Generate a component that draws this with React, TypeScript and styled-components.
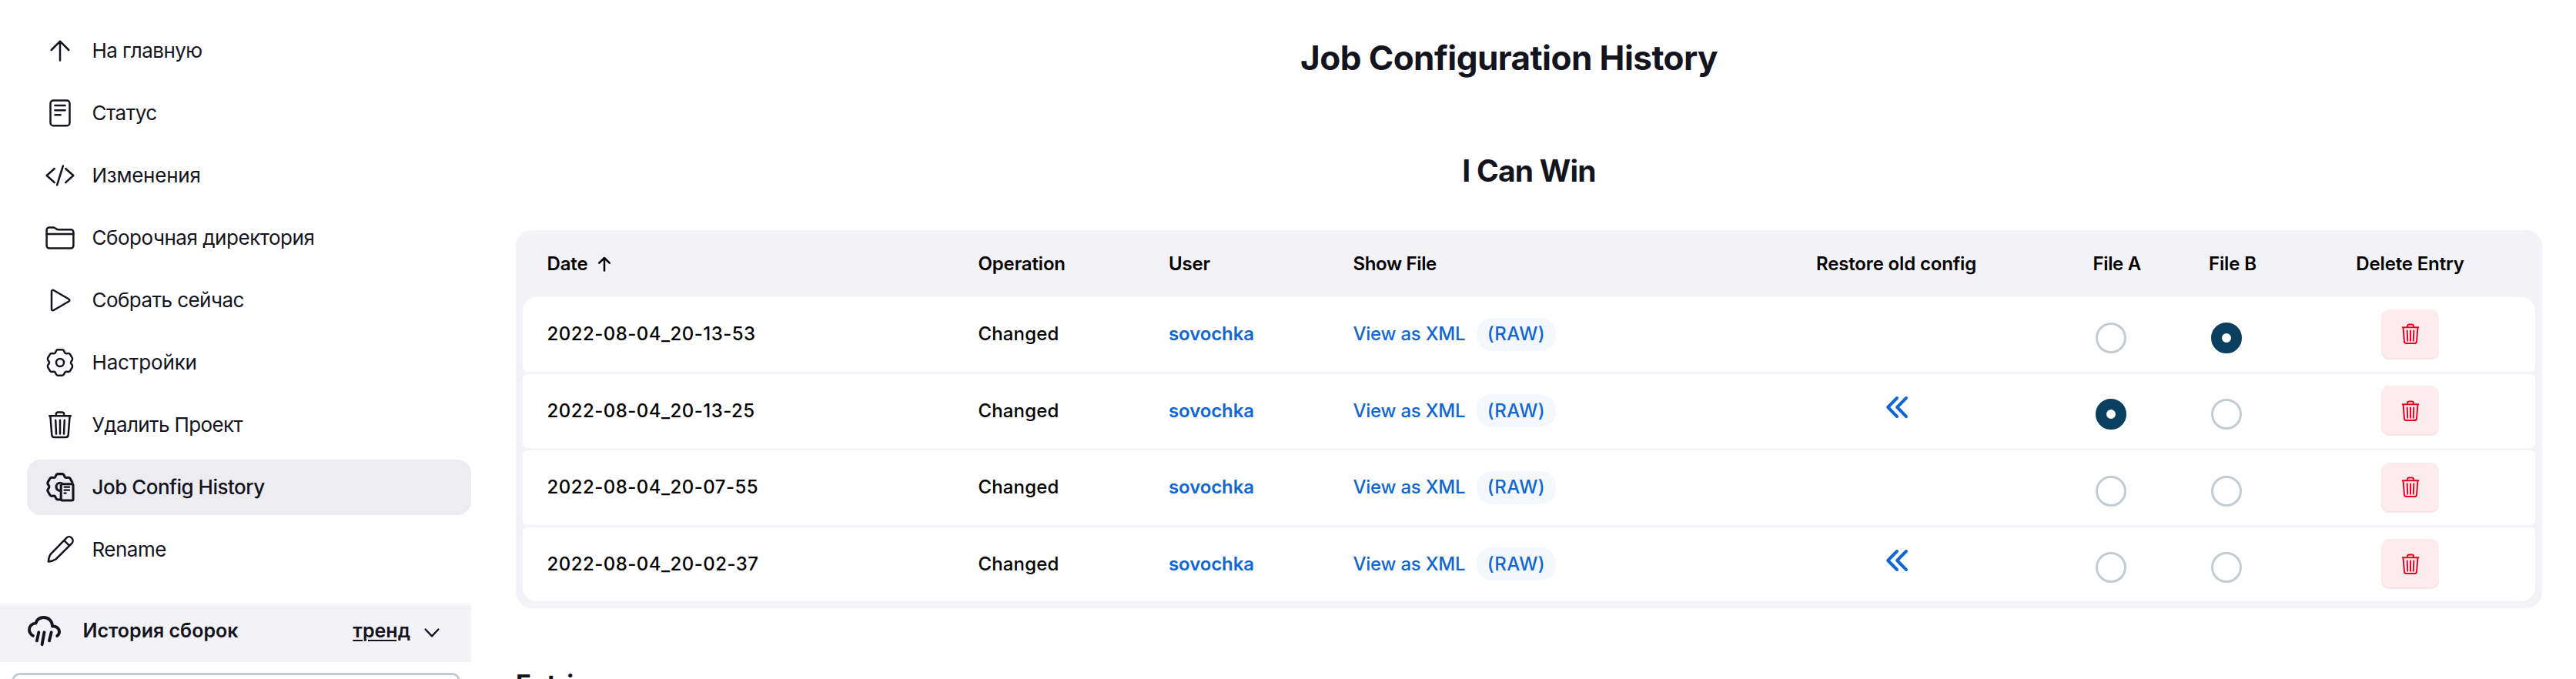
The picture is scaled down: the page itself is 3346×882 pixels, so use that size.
import React, { useState } from "react";
import styled, { createGlobalStyle, css } from "styled-components";

const GlobalStyle = createGlobalStyle`
  * { box-sizing: border-box; }
  html, body { margin: 0; padding: 0; background: #fff; }
  body {
    height: 882px;
    overflow: hidden;
    font-family: Inter, "Liberation Sans", sans-serif;
    color: #14141f;
  }
`;

/* ---------- page ---------- */

const Page = styled.div`
  display: flex;
  width: 3346px;
  height: 882px;
  overflow: hidden;
`;

const SidePanel = styled.aside`
  display: flex;
  flex-direction: column;
  flex: none;
  width: 612px;
  padding-top: 30px;
`;

const Tasks = styled.nav`
  display: flex;
  flex-direction: column;
  gap: 9px;
  padding-left: 35px;
`;

const Task = styled.a<{ $active?: boolean; $spacing: number }>`
  display: flex;
  align-items: center;
  gap: 17.5px;
  height: 72px;
  padding-left: 19px;
  border-radius: 18px;
  font-size: 26px;
  line-height: 1;
  font-weight: ${(p) => (p.$active ? 500 : 400)};
  letter-spacing: ${(p) => p.$spacing}px;
  background: ${(p) => (p.$active ? "#edecf1" : "transparent")};
  color: inherit;
  white-space: nowrap;
`;

const Icon = styled.svg<{ $width?: number }>`
  flex: none;
  width: 48px;
  height: 48px;
  fill: none;
  stroke: currentColor;
  stroke-width: ${(p) => p.$width ?? 2.5};
  stroke-linecap: round;
  stroke-linejoin: round;
`;

const BuildHistory = styled.section`
  display: flex;
  flex-direction: column;
  margin-top: 34px;
  border-top: 1px solid #f0eff4;
  padding-top: 1px;
`;

const BuildHeader = styled.header`
  display: flex;
  align-items: center;
  height: 74px;
  padding: 0 40px 8px 33px;
  background: #f3f2f7;
  font-size: 25px;
  font-weight: 600;
  line-height: 1;
`;

const BuildTitle = styled.span`
  flex: 1;
  padding-left: 26.5px;
`;

const TrendLink = styled.a`
  color: inherit;
  text-decoration: underline;
  text-decoration-thickness: 2px;
  text-underline-offset: 3px;
  margin-right: 17px;
`;

const Chevron = styled.svg`
  width: 22px;
  height: 14px;
  margin-top: 5px;
  fill: none;
  stroke: currentColor;
  stroke-width: 2.4;
  stroke-linecap: round;
  stroke-linejoin: round;
`;

const Filter = styled.input`
  flex: none;
  width: 583px;
  height: 70px;
  margin: 14px 0 0 15px;
  border: 3px solid #c3ccd1;
  border-radius: 11px;
  outline: none;
  background: #fff;
`;

const Main = styled.main`
  display: flex;
  flex-direction: column;
  flex: none;
  width: 2632px;
  margin-left: 58px;
`;

const PageTitle = styled.h1`
  margin: 45px 52px 0 0;
  font-size: 44px;
  line-height: 60px;
  font-weight: 700;
  letter-spacing: -0.55px;
  text-align: center;
`;

const JobName = styled.h2`
  margin: 87px 0 0;
  font-size: 39px;
  line-height: 60px;
  font-weight: 700;
  letter-spacing: -0.8px;
  text-align: center;
`;

const EntriesTitle = styled.h3`
  margin: 78px 0 0;
  font-size: 33px;
  line-height: 40px;
  font-weight: 700;
`;

/* ---------- table ---------- */

const Table = styled.div`
  display: flex;
  flex-direction: column;
  gap: 3px;
  margin-top: 47px;
  padding: 0 9px 9px;
  border-radius: 21px;
  background: #f3f2f7;
  color: #000;
  font-size: 24px;
  line-height: 1;
`;

const columns = css`
  display: grid;
  grid-template-columns: 560px 247.5px 239.5px 450px 511px 150.5px 99.5px 324px;
  align-items: center;
  padding-left: 31.5px;
`;

const HeaderRow = styled.div`
  ${columns}
  height: 87px;
  margin-bottom: -3px;
  font-weight: 600;
  letter-spacing: -0.15px;
`;

const Row = styled.div`
  ${columns}
  height: 96.5px;
  border-radius: 6px;
  background: #fff;
  font-weight: 500;

  &:nth-child(2) { border-top-left-radius: 18px; border-top-right-radius: 18px; }
  &:last-child { border-bottom-left-radius: 18px; border-bottom-right-radius: 18px; }
`;

const Cell = styled.div<{ $center?: boolean; $spacing?: number }>`
  display: flex;
  align-items: center;
  justify-content: ${(p) => (p.$center ? "center" : "flex-start")};
  letter-spacing: ${(p) => (p.$spacing === undefined ? "inherit" : `${p.$spacing}px`)};
  white-space: nowrap;
`;

const SortArrow = styled.svg`
  width: 18px;
  height: 20px;
  margin-left: 13px;
  fill: none;
  stroke: currentColor;
  stroke-width: 2.5;
  stroke-linecap: round;
  stroke-linejoin: round;
`;

const Link = styled.a<{ $strong?: boolean }>`
  color: #1066d2;
  font-weight: ${(p) => (p.$strong ? 600 : 500)};
  letter-spacing: ${(p) => (p.$strong ? -0.1 : -0.22)}px;
`;

const RawLink = styled.a`
  display: flex;
  align-items: center;
  justify-content: center;
  width: 103px;
  height: 43px;
  margin-left: 14.5px;
  border-radius: 20px;
  background: #f4f8fd;
  color: #1066d2;
  letter-spacing: 0.5px;
`;

const Restore = styled.svg`
  width: 30px;
  height: 30px;
  margin: 0 0 9px 1px;
  fill: none;
  stroke: #1066d2;
  stroke-width: 4;
  stroke-linecap: round;
  stroke-linejoin: round;
`;

const Radio = styled.button<{ $on: boolean }>`
  width: 40px;
  height: 40px;
  margin: 9px 0 0 3px;
  padding: 0;
  border: ${(p) => (p.$on ? "14px solid #0b3f60" : "3.5px solid #c3ccd1")};
  border-radius: 50%;
  background: #fff;
`;

const DeleteButton = styled.button`
  display: flex;
  align-items: center;
  justify-content: center;
  width: 75px;
  height: 65px;
  padding: 0;
  border: 0;
  border-radius: 11px;
  background: #fdecee;
  box-shadow: inset 0 -2px 0 #f5e3e6;
  color: #e6001f;
`;

const SmallTrash = styled.svg`
  width: 36px;
  height: 36px;
  fill: none;
  stroke: currentColor;
  stroke-width: 2.6;
  stroke-linecap: round;
  stroke-linejoin: round;
`;

/* ---------- icons ---------- */

/** Outline of a six-toothed cog with softened corners. */
function cogPath(cx: number, cy: number): string {
  const pts: [number, number][] = [];
  const at = (deg: number, r: number): [number, number] => [
    cx + r * Math.sin((deg * Math.PI) / 180),
    cy - r * Math.cos((deg * Math.PI) / 180),
  ];
  for (let tooth = 0; tooth < 6; tooth++) {
    pts.push(at(tooth * 60 - 15, 17.3), at(tooth * 60 + 15, 17.3), at(tooth * 60 + 30, 13.4));
  }
  const towards = (a: [number, number], b: [number, number], d: number) => {
    const len = Math.hypot(b[0] - a[0], b[1] - a[1]);
    return `${(a[0] + ((b[0] - a[0]) * d) / len).toFixed(2)} ${(a[1] + ((b[1] - a[1]) * d) / len).toFixed(2)}`;
  };
  return (
    pts
      .map((p, i) => {
        const prev = pts[(i + pts.length - 1) % pts.length];
        const next = pts[(i + 1) % pts.length];
        return `${i ? "L" : "M"}${towards(p, prev, 1.8)}Q${p[0].toFixed(2)} ${p[1].toFixed(2)} ${towards(p, next, 1.8)}`;
      })
      .join("") + "Z"
  );
}

const trash = (
  <>
    <path d="M10.2 12.3H37.8M11.4 12.5l1.9 24.4a3.2 3.2 0 0 0 3.2 3h15a3.2 3.2 0 0 0 3.2-3l1.9-24.4" />
    <path d="M18.8 12v-2a2.6 2.6 0 0 1 2.6-2.6h5.2a2.6 2.6 0 0 1 2.6 2.6v2M24 17.8v17.8M18.2 17.8l.8 17.8M29.8 17.8l-.8 17.8" />
  </>
);

const icons = {
  up: <path d="M12.7 23 24 11.7 35.3 23M24 12.5v24" />,
  status: (
    <>
      <rect x="11.5" y="7.4" width="25" height="32.8" rx="3.8" />
      <path d="M17.4 14H30.6M17.4 20.3H30.6M17.4 26.3H24.6" />
    </>
  ),
  code: <path d="M16.8 15 6.7 24l10.1 9.2M31.2 15l10.1 9-10.1 9.2M27.9 11.5 20.1 36.3" />,
  folder: (
    <>
      <path d="M6.6 34V13.8a3.4 3.4 0 0 1 3.4-3.4h5.2c2.6 0 3.6 2.8 6 2.8h16.8a3.4 3.4 0 0 1 3.4 3.4V34a3.6 3.6 0 0 1-3.6 3.6H10.2A3.6 3.6 0 0 1 6.6 34Z" />
      <path d="M6.6 19H41.4" />
    </>
  ),
  play: <path d="M13 12.6v22.8c0 1.5 1.3 2.3 2.6 1.6l19.8-11.5c1.2-.7 1.2-2.3 0-3L15.6 11c-1.3-.7-2.6.1-2.6 1.6Z" />,
  cog: (
    <>
      <path d={cogPath(24, 24)} />
      <circle cx="24" cy="24" r="5" />
    </>
  ),
  trash,
  history: (
    <>
      <path d={cogPath(24, 23.3)} />
      <circle cx="24" cy="23.3" r="5" />
      <rect x="24" y="18.5" width="19.5" height="23.5" fill="#edecf1" stroke="none" />
      <rect x="25.2" y="19.8" width="15.8" height="21.2" rx="1.4" />
      <path d="M29.8 23.6H35.8M29.8 27.6H35.8M29.8 31.6H31.4" strokeLinecap="square" strokeWidth="2.2" />
    </>
  ),
  pencil: (
    <path d="M8.8 39.6c.4-3.6 1-6.9 2.9-9.800L32.200 8.800a4.900 4.900 0 0 1 7 7L18.400 36.500C15.500 38.400 12.400 39.200 8.800 39.600ZM29.400 12.200l6.500 6.500" />
  ),
};

/* ---------- data ---------- */

const tasks: { icon: keyof typeof icons; label: string; spacing: number; active?: boolean }[] = [
  { icon: "up", label: "На главную", spacing: -0.55 },
  { icon: "status", label: "Статус", spacing: -0.5 },
  { icon: "code", label: "Изменения", spacing: -0.25 },
  { icon: "folder", label: "Сборочная директория", spacing: -0.47 },
  { icon: "play", label: "Собрать сейчас", spacing: -0.55 },
  { icon: "cog", label: "Настройки", spacing: -0.15 },
  { icon: "trash", label: "Удалить Проект", spacing: -0.62 },
  { icon: "history", label: "Job Config History", spacing: -0.5, active: true },
  { icon: "pencil", label: "Rename", spacing: -0.5 },
];

const entries = [
  { date: "2022-08-04_20-13-53", restorable: false },
  { date: "2022-08-04_20-13-25", restorable: true },
  { date: "2022-08-04_20-07-55", restorable: false },
  { date: "2022-08-04_20-02-37", restorable: true },
];

export default function App() {
  const [fileA, setFileA] = useState(1);
  const [fileB, setFileB] = useState(0);

  return (
    <Page>
      <GlobalStyle />
      <SidePanel>
        <Tasks>
          {tasks.map((task) => (
            <Task key={task.label} $active={task.active} $spacing={task.spacing}>
              <Icon viewBox="0 0 48 48" $width={task.active ? 3.1 : 2.5}>{icons[task.icon]}</Icon>
              {task.label}
            </Task>
          ))}
        </Tasks>
        <BuildHistory>
          <BuildHeader>
            <Icon viewBox="0 -1 48 48" $width={3.9}>
              <path d="M10 29.800C6.700 27.800 5 25.100 5 21.900c0-4.600 3.600-8.200 8.400-8.300C14.900 8.800 18.900 6 23.800 6c6.200 0 11.100 4.700 11.200 11.500 4.900-.5 9 2.600 9 7.200 0 2.200-1 4-2.800 5.300" />
              <path d="M17.300 25.300 14.900 36.300M24.500 25.300 21.600 41.200M33.700 25.300 31 36.300" />
            </Icon>
            <BuildTitle>История сборок</BuildTitle>
            <TrendLink>тренд</TrendLink>
            <Chevron viewBox="0 0 22 14">
              <path d="M2.600 2.500 11 11.300 19.400 2.500" />
            </Chevron>
          </BuildHeader>
          <Filter aria-label="Filter" />
        </BuildHistory>
      </SidePanel>

      <Main>
        <PageTitle>Job Configuration History</PageTitle>
        <JobName>I Can Win</JobName>
        <Table>
          <HeaderRow>
            <Cell>
              Date
              <SortArrow viewBox="0 0 18 20">
                <path d="M2.200 8.700 9 2l6.800 6.700M9 2.500V18.500" />
              </SortArrow>
            </Cell>
            <Cell>Operation</Cell>
            <Cell>User</Cell>
            <Cell $spacing={-0.35}>Show File</Cell>
            <Cell $center>Restore old config</Cell>
            <Cell $spacing={-0.35}>File A</Cell>
            <Cell>File B</Cell>
            <Cell $center>Delete Entry</Cell>
          </HeaderRow>
          {entries.map((entry, i) => (
            <Row key={entry.date}>
              <Cell $spacing={0.46}>{entry.date}</Cell>
              <Cell $spacing={0.15}>Changed</Cell>
              <Cell><Link $strong>sovochka</Link></Cell>
              <Cell>
                <Link>View as XML</Link>
                <RawLink>(RAW)</RawLink>
              </Cell>
              <Cell $center>
                {entry.restorable && (
                  <Restore viewBox="0 0 30 30">
                    <path d="M15 3 3.200 15 15 27M27 3 15.200 15 27 27" />
                  </Restore>
                )}
              </Cell>
              <Cell><Radio $on={fileA === i} onClick={() => setFileA(i)} /></Cell>
              <Cell><Radio $on={fileB === i} onClick={() => setFileB(i)} /></Cell>
              <Cell $center>
                <DeleteButton>
                  <SmallTrash viewBox="0 0 48 48">{trash}</SmallTrash>
                </DeleteButton>
              </Cell>
            </Row>
          ))}
        </Table>
        <EntriesTitle>Entries</EntriesTitle>
      </Main>
    </Page>
  );
}
